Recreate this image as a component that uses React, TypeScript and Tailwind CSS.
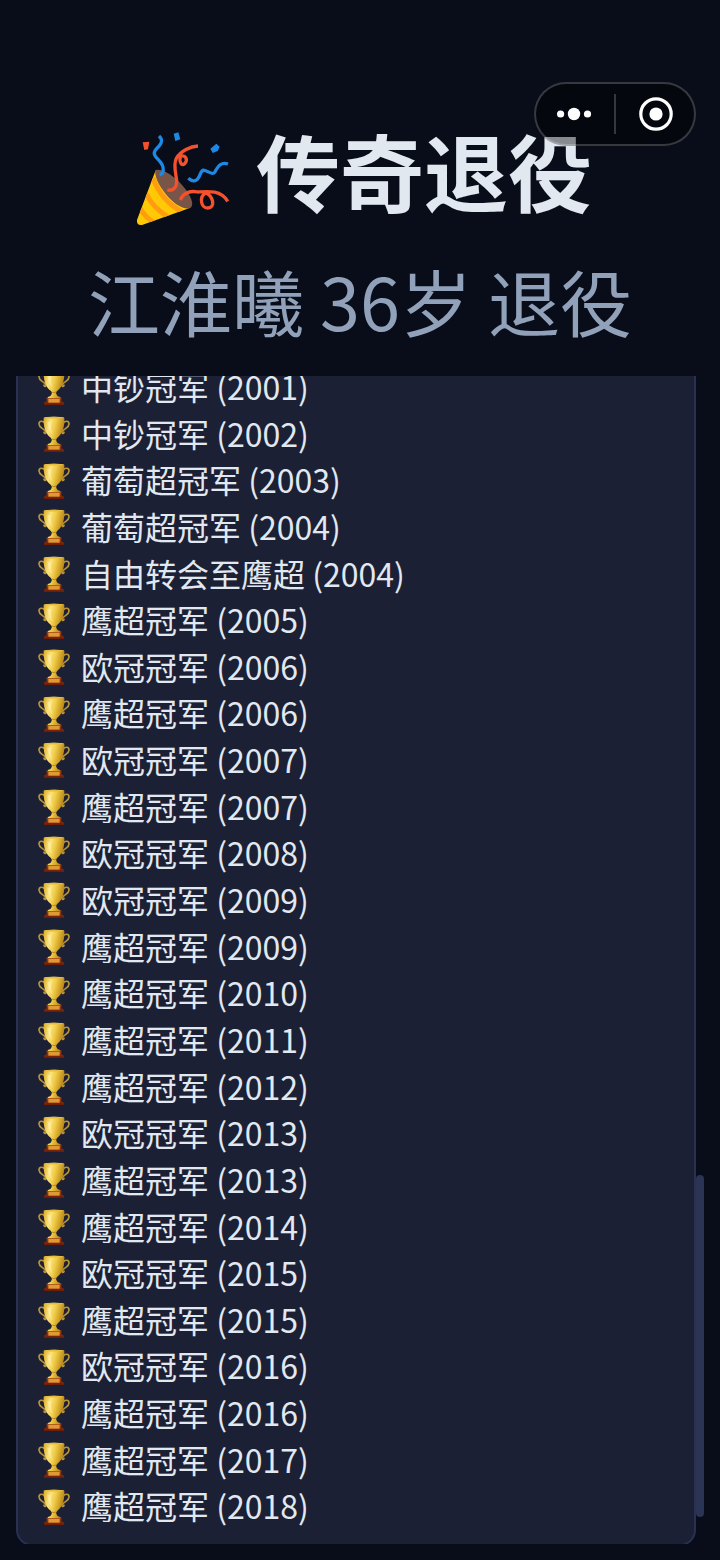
const achievements: [string, number][] = [
  ["中钞冠军", 2001],
  ["中钞冠军", 2002],
  ["葡萄超冠军", 2003],
  ["葡萄超冠军", 2004],
  ["自由转会至鹰超", 2004],
  ["鹰超冠军", 2005],
  ["欧冠冠军", 2006],
  ["鹰超冠军", 2006],
  ["欧冠冠军", 2007],
  ["鹰超冠军", 2007],
  ["欧冠冠军", 2008],
  ["欧冠冠军", 2009],
  ["鹰超冠军", 2009],
  ["鹰超冠军", 2010],
  ["鹰超冠军", 2011],
  ["鹰超冠军", 2012],
  ["欧冠冠军", 2013],
  ["鹰超冠军", 2013],
  ["鹰超冠军", 2014],
  ["欧冠冠军", 2015],
  ["鹰超冠军", 2015],
  ["欧冠冠军", 2016],
  ["鹰超冠军", 2016],
  ["鹰超冠军", 2017],
  ["鹰超冠军", 2018],
];

function TrophyDefs() {
  return (
    <svg className="absolute size-0" aria-hidden="true">
      <defs>
        <linearGradient id="cup" x1="0" y1="0" x2="1" y2="0.3">
          <stop offset="0" stopColor="#d9a822" />
          <stop offset="0.35" stopColor="#fbe47e" />
          <stop offset="0.6" stopColor="#efca45" />
          <stop offset="1" stopColor="#b88414" />
        </linearGradient>
        <linearGradient id="plinth" x1="0" y1="0" x2="0" y2="1">
          <stop offset="0" stopColor="#a8430f" />
          <stop offset="1" stopColor="#6b1a06" />
        </linearGradient>
      </defs>
    </svg>
  );
}

function Trophy() {
  return (
    <svg viewBox="0 0 120 132" className="h-11 w-10 shrink-0" aria-hidden="true">
      <g fill="none" stroke="#b9933c" strokeWidth="5" strokeLinecap="round">
        <path d="M33 37C27 28 15 29 15 39C15 51 29 51 35 62C38 68 32 69 30 64" />
        <path d="M87 37C93 28 105 29 105 39C105 51 91 51 85 62C82 68 88 69 90 64" />
      </g>
      <path d="M38 100H82V112L90 116V123H30V116L38 112Z" fill="url(#plinth)" />
      <path
        d="M29 20Q60 14 91 20C92 45 87 68 70 80Q65 84 67 90Q69 97 78 99V102H42V99Q51 97 53 90Q55 84 50 80C33 68 28 45 29 20Z"
        fill="url(#cup)"
      />
      <ellipse cx="60" cy="20" rx="30" ry="2.5" fill="#e6bd3c" />
      <path d="M40 32C41 49 47 62 56 71C51 57 50 45 52 32Z" fill="#fff4b4" opacity="0.5" />
      <path d="M54 84Q60 88 66 84" stroke="#a87312" strokeWidth="2" fill="none" />
      <rect x="43" y="104" width="34" height="12" fill="#e09a35" />
    </svg>
  );
}

function Popper() {
  return (
    <svg viewBox="0 0 360 360" className="mt-2.5 -mr-1 -mb-2.5 size-30 shrink-0" aria-hidden="true">
      <defs>
        <clipPath id="cone">
          <path d="M107 151L51 300Q49 317 66 315L207 265Q179 266 144 223Q113 187 107 151Z" />
        </clipPath>
      </defs>
      <path d="M107 151L51 300Q49 317 66 315L207 265Q179 266 144 223Q113 187 107 151Z" fill="#ffca05" />
      <g clipPath="url(#cone)" stroke="#ff9c10" strokeWidth="15" fill="none">
        <path d="M98 173Q124 243 186 275" />
        <path d="M79 222Q98 262 144 291" />
        <path d="M61 266Q75 292 102 307" />
      </g>
      <path
        d="M107 150C128 145 162 167 188 197C213 225 224 254 212 263C196 273 163 253 139 224C115 196 101 163 107 150Z"
        fill="#795548"
      />
      <g fill="none" strokeWidth="10" strokeLinejoin="round">
        <path d="M117 48C134 64 119 77 107 89C91 109 125 119 129 142C132 159 126 163 119 165" stroke="#1e88e5" />
        <path
          d="M205 175C215 184 227 187 235 174C243 162 242 148 253 151C266 153 277 167 284 157C295 137 304 125 324 132"
          stroke="#1e88e5"
        />
        <path
          d="M234 78C212 79 182 93 169 115C159 132 168 163 170 182C171 203 158 214 142 210M178 109C199 103 205 121 193 132C184 140 176 122 182 109"
          stroke="#f4512c"
        />
        <path
          d="M181 240C190 218 212 211 233 216C262 214 303 209 323 244M257 219C237 230 242 264 263 264C289 262 279 228 255 217"
          stroke="#f4512c"
        />
      </g>
      <path d="M68 67L88 65L84 88L73 90Z" fill="#f4512c" />
      <path d="M161 41L175 37L181 58L166 63Z" fill="#1e88e5" />
      <path d="M271 86L289 71L299 80L293 93L278 99Z" fill="#1e88e5" />
    </svg>
  );
}

function Capsule() {
  return (
    <div className="absolute top-[82px] right-6 z-10 flex h-16 w-[162px] items-center rounded-full border-2 border-white/20 bg-black/40 text-white">
      <button type="button" aria-label="更多" className="flex h-full flex-1 items-center justify-center">
        <svg viewBox="0 0 36 14" className="h-3.5 w-9" fill="currentColor" aria-hidden="true">
          <circle cx="3.6" cy="7" r="3.6" />
          <circle cx="17" cy="7" r="6.2" />
          <circle cx="30.5" cy="7" r="3.6" />
        </svg>
      </button>
      <span className="h-10 w-0.5 bg-white/20" />
      <button type="button" aria-label="关闭" className="flex h-full flex-1 items-center justify-center">
        <svg viewBox="0 0 36 36" className="size-9" fill="none" aria-hidden="true">
          <circle cx="19" cy="18" r="15.2" stroke="currentColor" strokeWidth="3.2" />
          <circle cx="19" cy="18" r="6.6" fill="currentColor" />
        </svg>
      </button>
    </div>
  );
}

export default function App() {
  return (
    <div className="relative flex h-screen flex-col overflow-hidden bg-[#090d19] px-4 pb-4 font-['Noto_Sans_CJK_SC',sans-serif] text-slate-200">
      <TrophyDefs />
      <Capsule />
      <header className="flex flex-col items-center pt-[110px]">
        <h1 className="flex items-center justify-center gap-5 pr-2 text-[84px] leading-[120px] font-bold whitespace-nowrap">
          <Popper />
          传奇退役
        </h1>
        <p className="pt-[18px] pb-6 text-7xl leading-[104px] whitespace-nowrap text-slate-400">江淮曦 36岁 退役</p>
      </header>
      <main className="flex min-h-0 flex-1">
        <div className="flex min-w-0 flex-1 flex-col justify-end overflow-hidden">
          <ul className="-mb-0.5 rounded-2xl border-2 border-[#2a3050] bg-[#1b2035] px-4 pb-[15px] text-[32px] leading-[1.458]">
            {achievements.map(([title, year]) => (
              <li key={title + year} className="flex items-center gap-[7px] whitespace-nowrap">
                <Trophy />
                <span>
                  {title} ({year})
                </span>
              </li>
            ))}
          </ul>
        </div>
        <div className="flex w-2 flex-col justify-end pb-[27px]" aria-hidden="true">
          <div className="h-[342px] rounded-full bg-[#2b3454]" />
        </div>
      </main>
    </div>
  );
}
